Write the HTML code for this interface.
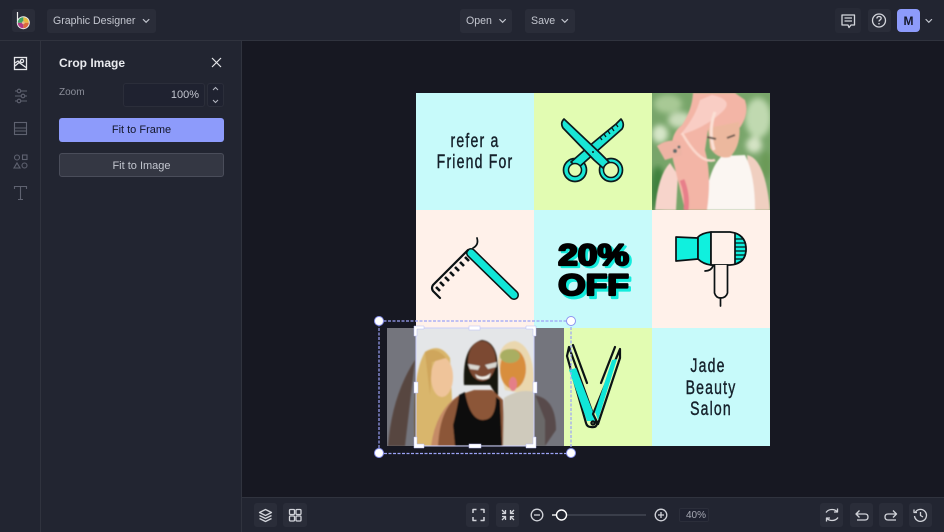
<!DOCTYPE html>
<html><head><meta charset="utf-8"><style>
html,body{margin:0;padding:0;width:944px;height:532px;overflow:hidden;background:#171822;font-family:"Liberation Sans",sans-serif}
.a{position:absolute}
.btn{position:absolute;background:#2a2d39;border-radius:3px;color:#c3c6cf;font-size:10.6px;line-height:24px;box-sizing:border-box}
svg{position:absolute;overflow:visible}
</style></head><body>
<svg class="a" style="left:0;top:0" width="944" height="532" viewBox="0 0 944 532">
<defs>
<filter id="b1"><feGaussianBlur stdDeviation=".8"/></filter>
<filter id="b2"><feGaussianBlur stdDeviation="3"/></filter>
<clipPath id="c1"><rect x="652" y="93" width="118" height="117"/></clipPath>
<clipPath id="c2"><rect x="387" y="328" width="177" height="118"/></clipPath>
</defs>
<rect x="416" y="93" width="118" height="117" fill="#c7fafa"/>
<rect x="534" y="93" width="118" height="117" fill="#e2fcb2"/>
<rect x="416" y="210" width="118" height="118" fill="#fff1ea"/>
<rect x="534" y="210" width="118" height="118" fill="#c7fafa"/>
<rect x="652" y="210" width="118" height="118" fill="#fff1ea"/>
<rect x="534" y="328" width="118" height="118" fill="#e2fcb2"/>
<rect x="652" y="328" width="118" height="118" fill="#c7fafa"/>

<g font-size="19" fill="#15202a" stroke="#15202a" stroke-width=".4" text-anchor="middle" letter-spacing="1.600">
<text transform="translate(475 147) scale(.74 1)">refer a</text>
<text transform="translate(475 168) scale(.74 1)">Friend For</text>
<text transform="translate(708 372) scale(.74 1)">Jade</text>
<text transform="translate(711 394) scale(.74 1)">Beauty</text>
<text transform="translate(711 415) scale(.74 1)">Salon</text>
</g>

<!-- scissors -->
<g stroke="#0c1a1c" stroke-width="1.700" fill="#19e6d5" stroke-linejoin="round">
<circle cx="575" cy="170" r="11.500"/><circle cx="611" cy="170" r="11.500"/>
<path d="M621 119 Q625 124 622 129 L596 152 L578 168 L571 162 L588 147 L600 137 L616 124 Z"/>
<path d="M564 119 L600 153 L609 162 L603 168 L594 160 L563 128 Q560 123 564 119 Z"/>
</g>
<circle cx="575" cy="170" r="6.500" fill="#e2fcb2" stroke="#0c1a1c" stroke-width="1.500"/>
<circle cx="611" cy="170" r="7.500" fill="#e2fcb2" stroke="#0c1a1c" stroke-width="1.500"/>
<path d="M600 137l2 3M604 134l2 3M608 131l2 3M612 128l2 3M616 124l2 3" stroke="#0c1a1c" stroke-width="1.300"/>
<circle cx="593" cy="152" r="1" fill="#0c1a1c"/>

<!-- comb razor -->
<g stroke-linecap="round" fill="none" stroke-linejoin="round">
<path d="M471 253 L514 295" stroke="#0b1214" stroke-width="10"/>
<path d="M471 253 L514 295" stroke="#10e6d8" stroke-width="7"/>
<path d="M468 250 L433 285 Q431 288 433 291 L440 298" stroke="#0b1214" stroke-width="2.200"/>
<path d="M473 248 Q479 245 477 238" stroke="#0b1214" stroke-width="1.700"/>
<path d="M465 257l4 4M460 262l4 4M455 267l4 4M450 272l4 4M445 277l4 4M440 282l4 4M436 287l4 4" stroke="#0b1214" stroke-width="2.600" stroke-linecap="butt"/>
</g>

<!-- 20% off -->
<g font-weight="700" font-size="30" text-anchor="middle" stroke-linejoin="round" stroke-width="2.200">
<text transform="translate(596 267) scale(1.180 1)" fill="#12ecdc" stroke="#12ecdc">20%</text>
<text transform="translate(596 298) scale(1.180 1)" fill="#12ecdc" stroke="#12ecdc">OFF</text>
<text transform="translate(593.500 265) scale(1.180 1)" fill="#000" stroke="#000">20%</text>
<text transform="translate(593.500 295) scale(1.180 1)" fill="#000" stroke="#000">OFF</text>
</g>

<!-- dryer -->
<g stroke="#0b1214" stroke-width="1.700" stroke-linejoin="round" stroke-linecap="round">
<path d="M676 237 L698 238 L698 259 L676 261 Z" fill="#10f0de"/>
<path d="M698 237 Q702 233 711 232 L711 265 Q703 264 698 259 Z" fill="#10f0de"/>
<path d="M711 232 H730 Q746 234 746 249 Q746 264 730 265 H711 Z" fill="#fff1ea"/>
<path d="M735 233 Q746 237 746 249 Q746 261 735 264 Z" fill="#10f0de"/>
<path d="M735 239h8M735 243h10M735 247h11M735 251h11M735 255h10M735 259h8" stroke-width="1.200"/>
<path d="M714.500 265 V293 Q716 298 720.500 298 Q726 298 727.500 293 V265" fill="#fff1ea"/>
<path d="M720.500 298 V306"/><path d="M705 271 Q711 271 713 266" fill="none"/>
</g>

<!-- flat iron -->
<g stroke="#0b1214" stroke-width="2.200" stroke-linejoin="round" stroke-linecap="round">
<path d="M567 356 L569 347 L593 414 L597 424 Q596 428 591 427 Q587 427 586 423 Z" fill="#e2fcb2"/>
<path d="M569 370 L576 368 L593 412 L595 421 L587 421 Z" fill="#10e6d8" stroke="none"/>
<path d="M620 349 L620 358 L598 424 L593 414 Z" fill="#e2fcb2"/>
<path d="M612 360 L617 359 L598 420 L595 412 Z" fill="#10e6d8" stroke="none"/>
<path d="M573 345 L587 383 M615 347 L601 383" fill="none"/>
<circle cx="593" cy="423" r="1.600" fill="none"/>
</g>

<!-- pink hair photo -->
<g clip-path="url(#c1)">
<rect x="652" y="93" width="118" height="117" fill="#78a56a"/>
<g filter="url(#b2)">
<ellipse cx="668" cy="104" rx="14" ry="9" fill="#a8c995"/>
<ellipse cx="680" cy="120" rx="12" ry="8" fill="#c9dcba"/>
<ellipse cx="758" cy="118" rx="13" ry="20" fill="#c0d9b0"/>
<ellipse cx="660" cy="134" rx="8" ry="9" fill="#d6e6c8"/>
<ellipse cx="658" cy="190" rx="8" ry="24" fill="#3f813e"/>
<ellipse cx="766" cy="165" rx="6" ry="14" fill="#6a9a56"/>
<ellipse cx="754" cy="145" rx="8" ry="8" fill="#d4e3c4"/>
</g>
<g filter="url(#b1)">
<path d="M747 155 Q765 158 770 210 L752 210 Z" fill="#f0cfc0"/>
<path d="M655 210 Q658 175 670 163 L678 175 L676 210 Z" fill="#f7d4cb"/>
<path d="M705 210 Q707 170 722 156 L745 155 Q755 175 755 210 Z" fill="#fbf6f2"/>
<path d="M693 93 Q692 110 682 125 Q668 135 673 160 L685 210 L707 210 Q712 175 705 150 L708 130 L738 130 Q750 115 745 100 L735 93 Z" fill="#f3b5a6"/>
<path d="M708 128 L739 122 Q742 145 730 157 Q718 160 710 148 Z" fill="#ecb89e"/>
<path d="M700 100 Q695 118 680 135 Q705 128 722 112 Q735 100 712 95 Z" fill="#f9cdc4"/>
<path d="M682 133 Q700 165 715 160" fill="none" stroke="#fbd8cc" stroke-width="2.500"/>
<path d="M715 112 Q708 130 714 150" fill="none" stroke="#fbe0d5" stroke-width="3"/>
<path d="M657 146 Q668 138 680 142 L682 155 L665 160 Z" fill="#eeb4a4"/>
<path d="M707 137l9 2M727 138l8-3" stroke="#66564c" stroke-width="2"/>
<path d="M682 180 Q688 195 686 210" stroke="#e77f8a" stroke-width="5" fill="none"/>
<circle cx="675" cy="151" r="2" fill="#5c6a6a"/>
<circle cx="679" cy="147" r="1.500" fill="#5c6a6a"/>
</g>
</g>

<!-- women photo -->
<g clip-path="url(#c2)">
<rect x="387" y="328" width="177" height="118" fill="#e4e6e8"/>
<g filter="url(#b1)">
<path d="M388 446 Q392 395 415 360 L405 446 Z" fill="#a8856a"/>
<path d="M530 395 Q556 395 556 430 L545 446 L525 446 Z" fill="#a98d80"/>
<path d="M415 446 Q411 375 425 352 Q440 342 450 358 L452 400 L444 420 L440 446 Z" fill="#d9b66c"/>
<ellipse cx="442" cy="377" rx="11" ry="20" fill="#efc49a"/>
<path d="M425 352 Q436 346 446 358 L432 362 L430 395 Z" fill="#cfa65c"/>
<path d="M431 446 Q436 410 458 396 L470 446 Z" fill="#c58b66"/>
<path d="M464 385 Q462 345 482 340 Q498 342 498 370 L498 398 L490 385 L470 385 Z" fill="#15120f"/>
<ellipse cx="482" cy="361" rx="14" ry="20" fill="#7b4a30"/>
<path d="M468 364 L480 366 L478 370 L470 369 Z M485 365 L497 362 L496 367 L488 369 Z" fill="#d9d8d2"/>
<path d="M475 374 Q483 380 491 373 L489 378 Q483 381 477 378 Z" fill="#f3f0ea"/>
<path d="M438 446 Q440 405 462 394 L474 390 L492 390 L503 400 L505 446 Z" fill="#8c5638"/>
<path d="M455 446 L453 425 Q458 405 459 395 L465 392 Q470 420 483 420 Q496 420 496 397 L500 400 L502 446 Z" fill="#0e0d0f"/>
<path d="M498 362 Q500 342 515 341 Q532 345 534 378 L533 395 L505 390 Z" fill="#ead7ae"/>
<ellipse cx="513" cy="369" rx="13" ry="20" fill="#d88e3e"/>
<ellipse cx="510" cy="356" rx="10" ry="7" fill="#a9ae62"/>
<ellipse cx="513" cy="384" rx="4" ry="7" fill="#e47f88"/>
<path d="M503 446 L504 398 Q520 388 534 392 L545 420 L545 446 Z" fill="#cfcabc"/>
</g>
</g>
<rect x="387" y="328" width="29" height="118" fill="#0d0d1a" opacity=".52"/>
<rect x="534" y="328" width="30" height="118" fill="#0d0d1a" opacity=".52"/>

<!-- crop handles -->
<rect x="416" y="328" width="118" height="118" fill="none" stroke="#c9cdfa" stroke-width="1"/>
<g fill="#fff" stroke="#b7bcf5" stroke-width=".5">
<path d="M414 326h10v3h-7v7h-3z"/><path d="M536 326h-10v3h7v7h3z"/>
<path d="M414 448h10v-4h-7v-7h-3z"/><path d="M536 448h-10v-4h7v-7h3z"/>
<rect x="469" y="326" width="11" height="4"/><rect x="469" y="444" width="12" height="4"/>
<rect x="414" y="382" width="4" height="11"/><rect x="533" y="382" width="4" height="11"/>
</g>
<rect x="379" y="321" width="192" height="132.500" fill="none" stroke="#9ba2f7" stroke-width="1.200" stroke-dasharray="3 1.500"/>
<g fill="#fff" stroke="#8d95f0"><circle cx="379" cy="321" r="4.500"/><circle cx="571" cy="321" r="4.500"/><circle cx="379" cy="453" r="4.500"/><circle cx="571" cy="453" r="4.500"/></g>
</svg>

<!-- top bar -->
<div class="a" style="left:0;top:0;width:944px;height:41px;box-sizing:border-box;background:#222531;border-bottom:1px solid #30333e"></div>
<div class="a" style="left:12px;top:9px;width:23px;height:23px;background:#2a2d39;border-radius:3px"></div>
<svg class="a" style="left:12px;top:9px" width="23" height="23" viewBox="0 0 23 23">
<path d="M5.500 3 V12" stroke="#eee" stroke-width="1.200"/>
<circle cx="11.300" cy="13.700" r="6.500" fill="#ececec"/>
<path d="M11.300 8.200 a5.500 5.500 0 0 1 5.500 5.500 h-5.500z" fill="#e9b93f"/><path d="M16.800 13.700 a5.500 5.500 0 0 1-5.500 5.500 v-5.500z" fill="#dc6a3c"/><path d="M11.300 19.200 a5.500 5.500 0 0 1-5.500-5.500 h5.500z" fill="#b23b86"/><path d="M5.800 13.700 a5.500 5.500 0 0 1 5.500-5.500 v5.500z" fill="#3fa465"/>
<circle cx="11.300" cy="13.700" r="1.400" fill="#e8c090"/>
</svg>
<div class="btn" style="left:47px;top:9px;width:109px;padding-left:6px">Graphic Designer</div>
<div class="btn" style="left:460px;top:9px;width:52px;padding-left:6px">Open</div>
<div class="btn" style="left:525px;top:9px;width:50px;padding-left:6px">Save</div>
<svg class="a" style="left:0;top:0" width="944" height="40" viewBox="0 0 944 40"><g fill="none" stroke="#c3c6cf" stroke-width="1.200"><path d="M143.300 19.500l2.800 2.800 2.800-2.800M499.800 19.500l2.800 2.800 2.800-2.800M562 19.500l2.800 2.800 2.800-2.800M926 19.500l2.800 2.800 2.800-2.800" stroke-linecap="round"/></g></svg>
<div class="a" style="left:835px;top:8px;width:26px;height:25px;background:#272a36;border-radius:3px"></div>
<div class="a" style="left:868px;top:9px;width:23px;height:23px;background:#2a2d39;border-radius:3px"></div>
<div class="a" style="left:897px;top:9px;width:23px;height:23px;background:#8d9bfb;border-radius:4px;color:#14172a;font-weight:700;font-size:12px;line-height:24px;text-align:center">M</div>
<svg class="a" style="left:0;top:0" width="944" height="40" viewBox="0 0 944 40"><g fill="none" stroke="#d4d6dc" stroke-width="1.300" stroke-linejoin="round"><path d="M842 15h12.500v10h-3.500l-2 2.500-1-2.500h-6zM844.500 18h7.500M844.500 21h7.500"/><circle cx="879" cy="20.500" r="6.500"/><path d="M876.800 18.500q.3-2 2.200-2 2.200 0 2.200 1.800c0 1.600-2.200 1.700-2.200 3.200"/></g><circle cx="879" cy="23.700" r=".8" fill="#d4d6dc"/></svg>

<!-- sidebars -->
<div class="a" style="left:0;top:41px;width:41px;height:491px;box-sizing:border-box;background:#222531;border-right:1px solid #30333e"></div>
<div class="a" style="left:41px;top:41px;width:201px;height:491px;box-sizing:border-box;background:#222531;border-right:1px solid #30333e"></div>
<svg class="a" style="left:0;top:41px" width="40" height="170" viewBox="0 41 40 170" fill="none" stroke="#5f6270" stroke-width="1.100">
<g stroke="#e6e7ea" stroke-width="1.300"><rect x="14.500" y="57.500" width="12" height="12"/><circle cx="22" cy="61" r="1.600"/><path d="M15 66l4-3.500 7 5"/><path d="M15 63l3-2 2 1.500"/></g>
<path d="M15 91h12M15 96h12M15 101h12"/><circle cx="19" cy="91" r="1.800" fill="#222531"/><circle cx="23" cy="96" r="1.800" fill="#222531"/><circle cx="19" cy="101" r="1.800" fill="#222531"/>
<rect x="14.500" y="122.500" width="12" height="12"/><path d="M14.500 128h12M14.500 131h12"/>
<circle cx="17" cy="157.500" r="2.500"/><rect x="22.500" y="155" width="4.500" height="4.500"/><path d="M17 163l3 5h-6z"/><circle cx="24.500" cy="165.500" r="2.500"/>
<path d="M14.500 189v-2.500h12v2.500M20.500 186.500v13M18 199.500h5"/>
</svg>

<!-- panel -->
<div class="a" style="left:59px;top:56px;color:#e9eaee;font-size:12px;font-weight:700">Crop Image</div>
<svg class="a" style="left:211px;top:57px" width="11" height="11" viewBox="0 0 11 11"><path d="M1 1l9 9M10 1l-9 9" stroke="#e6e7ea" stroke-width="1.200"/></svg>
<div class="a" style="left:59px;top:87px;color:#8b8e99;font-size:10px">Zoom</div>
<div class="a" style="left:123px;top:83px;width:82px;height:24px;background:#1f2230;border:1px solid #2b2e3a;border-radius:3px;box-sizing:border-box;color:#c3c6cf;font-size:11px;line-height:23px;text-align:right;padding-right:5px">100%</div>
<div class="a" style="left:207px;top:83px;width:17px;height:24px;background:#1f2230;border:1px solid #2b2e3a;border-radius:3px;box-sizing:border-box"></div>
<svg class="a" style="left:207px;top:83px" width="17" height="24" viewBox="0 0 17 24"><path d="M6 7l2.500-2.500L11 7M6 17l2.500 2.500 2.500-2.500" fill="none" stroke="#b5b8c2" stroke-width="1"/></svg>
<div class="a" style="left:59px;top:118px;width:165px;height:24px;background:#8d9bfb;border-radius:3px;color:#14172a;font-size:11px;line-height:25px;text-align:center">Fit to Frame</div>
<div class="a" style="left:59px;top:153px;width:165px;height:24px;background:#343743;border:1px solid #4a4d5a;border-radius:3px;box-sizing:border-box;color:#c3c6cf;font-size:11px;line-height:24px;text-align:center">Fit to Image</div>

<!-- bottom bar -->
<div class="a" style="left:242px;top:497px;width:702px;height:35px;background:#222531;border-top:1px solid #30333e;box-sizing:border-box"></div>
<div class="a" style="left:254px;top:503px;width:23px;height:24px;background:#2a2d39;border-radius:3px"></div>
<div class="a" style="left:283px;top:503px;width:24px;height:24px;background:#2a2d39;border-radius:3px"></div>
<div class="a" style="left:466px;top:503px;width:23px;height:24px;background:#2a2d39;border-radius:3px"></div>
<div class="a" style="left:496px;top:503px;width:23px;height:24px;background:#2a2d39;border-radius:3px"></div>
<div class="a" style="left:820px;top:503px;width:23px;height:24px;background:#2a2d39;border-radius:3px"></div>
<div class="a" style="left:850px;top:503px;width:23px;height:24px;background:#2a2d39;border-radius:3px"></div>
<div class="a" style="left:879px;top:503px;width:24px;height:24px;background:#2a2d39;border-radius:3px"></div>
<div class="a" style="left:909px;top:503px;width:23px;height:24px;background:#2a2d39;border-radius:3px"></div>
<div class="a" style="left:679px;top:508px;width:30px;height:14px;background:#1f2230;border:1px solid #2b2e3a;border-radius:2px;box-sizing:border-box;color:#a6a9b3;font-size:10px;line-height:13px;text-align:right;padding-right:2px">40%</div>
<svg class="a" style="left:0;top:0" width="944" height="532" viewBox="0 0 944 532"><g fill="none" stroke="#d2d4da" stroke-width="1.300" stroke-linejoin="round">
<path d="M265.500 509.500l6 3-6 3-6-3zM259.500 515.500l6 3 6-3M259.500 518.500l6 3 6-3"/>
<rect x="289.500" y="509.500" width="5" height="5" rx="1"/><rect x="296" y="509.500" width="5" height="5" rx="1"/><rect x="289.500" y="516" width="5" height="5" rx="1"/><rect x="296" y="516" width="5" height="5" rx="1"/>
<path d="M473 513v-3.500h3.500M484 513v-3.500h-3.500M473 517v3.500h3.500M484 517v3.500h-3.500" stroke-width="1.500"/>
<path d="M502 510l3.500 3.500M505.500 510v3.500H502M514 510l-3.500 3.500M510.500 510v3.500h3.500M502 520l3.500-3.500M502 516.500h3.500V520M514 520l-3.500-3.500M514 516.500h-3.500V520" stroke-width="1.300"/>
<circle cx="537" cy="515" r="5.800"/><path d="M534 515h6"/>
<circle cx="661" cy="515" r="5.800"/><path d="M658 515h6M661 512v6"/>
<path d="M826 512.500q2-3 6-3 3 0 5 2M838 517.500q-2 3-6 3-3 0-5-2M837.500 508.500v3.500h-3.500M826.500 521.500v-3.500h3.500"/>
<path d="M857 514h8q3 0 3 3t-3 3h-8M859.500 510.500L856 514l3.500 3.500"/>
<path d="M896 514h-8q-3 0-3 3t3 3h8M893 510.500l3.500 3.500-3.500 3.500"/>
<path d="M915.500 512a6 6 0 1 1-1 4M914 509.500v3h3M920.500 512v3.500l2.500 1.500"/>
</g>
<path d="M552 515h94" stroke="#4a4d5a" stroke-width="1.200"/><path d="M552 515h6" stroke="#fff" stroke-width="1.300"/>
<circle cx="561.500" cy="515" r="5" fill="#222531" stroke="#fff" stroke-width="1.400"/>
</svg>
</body></html>
